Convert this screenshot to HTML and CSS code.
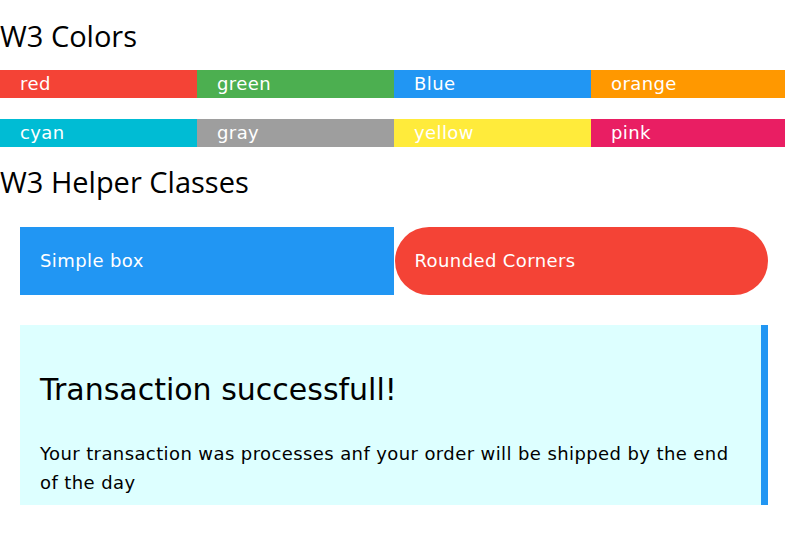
FILE: index.html
```html
<!DOCTYPE html>
<html>
<head>
<meta charset="utf-8">
<link rel="stylesheet" href="styles.css">
</head>
<body>
<div class="page">
  <h2 class="heading first">W3 Colors</h2>
  <div class="bars">
    <div class="bar red">red</div>
    <div class="bar green">green</div>
    <div class="bar blue">Blue</div>
    <div class="bar orange">orange</div>
  </div>
  <div class="bars second">
    <div class="bar cyan">cyan</div>
    <div class="bar gray">gray</div>
    <div class="bar yellow">yellow</div>
    <div class="bar pink">pink</div>
  </div>
  <h2 class="heading helper">W3 Helper Classes</h2>
  <div class="boxes">
    <div class="box blue">Simple box</div>
    <div class="box red round">Rounded Corners</div>
  </div>
  <div class="panel">
    <h3 class="panel-title">Transaction successfull!</h3>
    <p class="panel-text">Your transaction was processes anf your order will be shipped by the end of the day</p>
  </div>
</div>
</body>
</html>
```
FILE: styles.css
```css
html, body {
  margin: 0;
  padding: 0;
  overflow: hidden;
  background: #fff;
}
.page {
  width: 788px;
  font-family: "DejaVu Sans", Verdana, sans-serif;
  color: #000;
  letter-spacing: 0.4px;
}
.heading {
  font-family: "Open Sans", "Segoe UI", sans-serif;
  font-weight: 400;
  font-size: 29px;
  line-height: 40px;
  margin: 0;
  letter-spacing: 0;
}
.heading.first {
  padding-top: 16px;
  margin-bottom: 14px;
}
.heading.helper {
  margin-top: 15px;
  margin-bottom: 25px;
}
.bars {
  display: grid;
  grid-template-columns: repeat(4, 197px);
}
.bars.second {
  margin-top: 21px;
}
.bar {
  height: 28px;
  line-height: 28px;
  padding-left: 20px;
  color: #fff;
  font-size: 18px;
}
.red { background: #f44336; }
.green { background: #4caf50; }
.blue { background: #2196f3; }
.orange { background: #ff9800; }
.cyan { background: #00bcd4; }
.gray { background: #9e9e9e; }
.yellow { background: #ffeb3b; }
.pink { background: #e91e63; }
.boxes {
  display: flex;
  margin: 0 20px;
  gap: 1px;
}
.box {
  flex: 1;
  height: 68px;
  line-height: 68px;
  padding-left: 20px;
  color: #fff;
  font-size: 18px;
}
.box.round {
  border-radius: 34px;
}
.panel {
  margin: 30px 20px 0;
  background: #ddffff;
  border-right: 7px solid #2196f3;
  padding: 43px 20px 8px;
}
.panel-title {
  font-weight: 400;
  font-size: 30px;
  line-height: 44px;
  margin: 0 0 27px;
  letter-spacing: 0;
}
.panel-text {
  font-size: 18px;
  line-height: 29px;
  margin: 0;
}
```
